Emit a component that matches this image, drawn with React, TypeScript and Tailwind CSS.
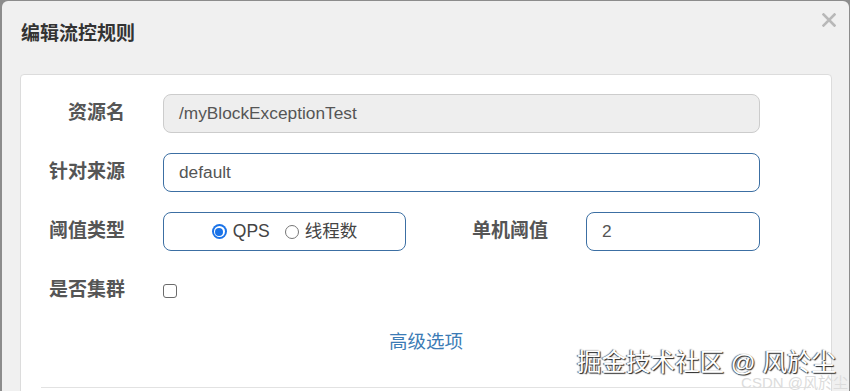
import React from "react";

const cjk = { fontFamily: '"Liberation Sans", "Noto Sans CJK SC", sans-serif' };

function Radio({ checked, label }: { checked: boolean; label: string }) {
  return (
    <label className="flex items-center">
      {checked ? (
        <span className="w-[15px] h-[15px] rounded-full bg-[#1a73e8] flex items-center justify-center">
          <span className="w-[11px] h-[11px] rounded-full bg-white flex items-center justify-center">
            <span className="w-[8px] h-[8px] rounded-full bg-[#1a73e8]" />
          </span>
        </span>
      ) : (
        <span className="w-[14px] h-[14px] rounded-full border border-[#767676] bg-white" />
      )}
      <span className="ml-[6px] text-[17.5px] text-[#444]">{label}</span>
    </label>
  );
}

export default function App() {
  return (
    <div
      className="w-[850px] h-[391px] bg-[#8c8c8c] pl-[2px] pr-[1px] pt-[1px] overflow-hidden relative"
      style={cjk}
    >
      <div className="w-full h-[400px] bg-[#f0f0f0] rounded-t-[6px] relative">
        <div className="h-[73px] flex items-center pl-[19px] pb-[6px]">
          <h1 className="text-[19px] font-bold text-[#333]">编辑流控规则</h1>
        </div>
        <svg
          className="absolute left-[820px] top-[12px]"
          width="14"
          height="14"
          viewBox="0 0 14 14"
        >
          <path d="M1.5 1.5 L12.5 12.5 M12.5 1.5 L1.5 12.5" stroke="#b8b8b8" strokeWidth="2.6" strokeLinecap="square" />
        </svg>
        <div className="ml-[18px] w-[812px] bg-white border border-[#dcdcdc] rounded-[4px] pt-[19px] h-[330px]">
          <div className="flex items-center h-[39px]">
            <div className="w-[104px] text-right text-[19px] font-bold text-[#555]">资源名</div>
            <div className="ml-[38px] w-[597px] h-[39px] bg-[#eeeeee] border border-[#cccccc] rounded-[8px] flex items-center pl-[15px] text-[17.3px] text-[#555]">
              /myBlockExceptionTest
            </div>
          </div>
          <div className="flex items-center h-[39px] mt-[20px]">
            <div className="w-[104px] text-right text-[19px] font-bold text-[#555]">针对来源</div>
            <div className="ml-[38px] w-[597px] h-[39px] bg-white border border-[#3c6fa3] rounded-[8px] flex items-center pl-[15px] text-[17.3px] text-[#555]">
              default
            </div>
          </div>
          <div className="flex items-center h-[39px] mt-[20px]">
            <div className="w-[104px] text-right text-[19px] font-bold text-[#555]">阈值类型</div>
            <div className="ml-[38px] w-[243px] h-[39px] bg-white border border-[#3c6fa3] rounded-[8px] flex items-center justify-center gap-[15px]">
              <Radio checked label="QPS" />
              <Radio checked={false} label="线程数" />
            </div>
            <div className="w-[142px] text-right text-[19px] font-bold text-[#555]">单机阈值</div>
            <div className="ml-[38px] w-[174px] h-[39px] bg-white border border-[#3c6fa3] rounded-[8px] flex items-center pl-[15px] text-[17.3px] text-[#555]">
              2
            </div>
          </div>
          <div className="flex items-center h-[39px] mt-[20px]">
            <div className="w-[104px] text-right text-[19px] font-bold text-[#555]">是否集群</div>
            <div className="ml-[38px] w-[14px] h-[14px] border border-[#6b6b6b] rounded-[3px] bg-white" />
          </div>
          <div className="flex justify-center mt-[18px]">
            <span className="text-[18.5px] text-[#3b7bb5]">高级选项</span>
          </div>
          <div className="mx-[20px] mt-[31px] border-t border-[#e2e2e2]" />
        </div>
      </div>
      <div className="absolute right-[14px] bottom-[14px] text-[24.5px] leading-[28px] text-white [text-shadow:1px_1px_1px_#222,-1px_0_1px_#555]">
        掘金技术社区 @ 风於尘
      </div>
      <div className="absolute right-[2px] bottom-[0px] text-[15px] leading-[17px] text-[#dcdcdc]">
        CSDN @风於尘
      </div>
    </div>
  );
}
